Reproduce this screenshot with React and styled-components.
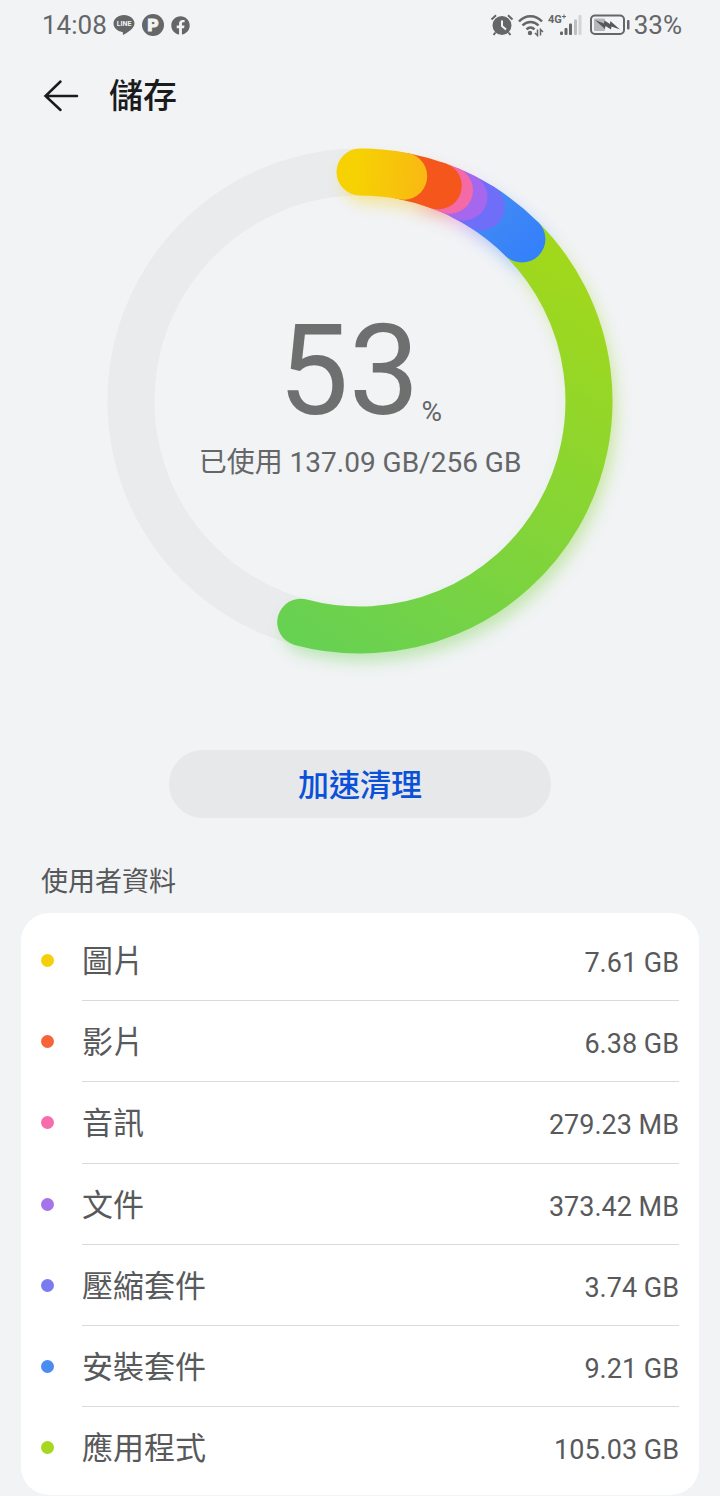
import React from 'react';
import styled, { createGlobalStyle } from 'styled-components'
import { FaFacebook } from 'react-icons/fa'

const CENTER = 253
const RADIUS = 229

// angles in degrees, clockwise from the top of the ring
const segments = [
  { id: 'images', name: '圖片', size: '7.61 GB', dot: '#f5d00a', stroke: 'url(#yellow)', from: 0, to: 11 },
  { id: 'videos', name: '影片', size: '6.38 GB', dot: '#f7643a', stroke: '#f5561c', from: 11, to: 20 },
  { id: 'audio', name: '音訊', size: '279.23 MB', dot: '#f76dab', stroke: '#f36aa6', from: 20, to: 23 },
  { id: 'docs', name: '文件', size: '373.42 MB', dot: '#a674ea', stroke: '#a467ee', from: 23, to: 27 },
  { id: 'archives', name: '壓縮套件', size: '3.74 GB', dot: '#7b7bf0', stroke: '#6f6ef8', from: 27, to: 32 },
  { id: 'packages', name: '安裝套件', size: '9.21 GB', dot: '#4a8cf0', stroke: 'url(#blue)', from: 32, to: 45 },
  { id: 'apps', name: '應用程式', size: '105.03 GB', dot: '#a5d81e', stroke: 'url(#green)', from: 45, to: 195 },
]

const point = angle => {
  const rad = (angle * Math.PI) / 180
  return `${CENTER + RADIUS * Math.sin(rad)} ${CENTER - RADIUS * Math.cos(rad)}`
}

const arc = ({ from, to }) =>
  `M${point(from)} A${RADIUS} ${RADIUS} 0 ${to - from > 180 ? 1 : 0} 1 ${point(to)}`

function StatusBar() {
  return (
    <StyledStatus>
      <Group>
        <span>14:08</span>
        <svg width='22' height='22' viewBox='0 0 22 22'>
          <path fill='#646668' d='M11 1C5.200 1 .5 4.800 .5 9.500c0 4.200 3.700 7.700 8.700 8.400.9.200.8.800.6 2.100-.1.900.4 1 1.200.5 3-1.700 10.500-6 10.500-11C21.500 4.800 16.800 1 11 1z' />
          <text x='11' y='12' textAnchor='middle' fontSize='7' fontWeight='700' fill='#f1f3f5'>LINE</text>
        </svg>
        <svg width='24' height='24' viewBox='0 0 24 24'>
          <circle cx='12' cy='12' r='11' fill='#646668' />
          <text x='12' y='18' textAnchor='middle' fontSize='17' fontWeight='900' fill='#f1f3f5' stroke='#f1f3f5'>P</text>
        </svg>
        <FaFacebook size={19} />
      </Group>
      <Group $tight>
        <svg width='24' height='24' viewBox='0 0 24 24'>
          <circle cx='12' cy='12.500' r='9.500' fill='#646668' />
          <path d='M1.500 6.500 6 2.300M22.500 6.500 18 2.300M5.500 19.500 3.500 22M18.500 19.500l2 2.500' stroke='#646668' strokeWidth='2' fill='none' />
          <path d='M12 7.500v5.500l4 3.500' stroke='#f1f3f5' strokeWidth='2' fill='none' />
        </svg>
        <svg width='28' height='24' viewBox='0 0 28 24' fill='none' stroke='#646668' strokeWidth='2.500'>
          <path d='M2 8.500c6.500-7 16.500-7 23 0M5.500 12.500c4.500-4.600 11.500-4.600 16 0M9.500 16.300c2.400-2.300 5.600-2.300 8 0' />
          <circle cx='13' cy='20' r='2.200' fill='#646668' stroke='none' />
          <path d='M20.500 16.500v6l-2.500-2.500M23.500 22.500v-6l2.500 2.500' strokeWidth='1.500' />
        </svg>
        <svg width='38' height='24' viewBox='0 0 38 24' fill='#646668'>
          <text x='0' y='10' fontSize='11' fontWeight='700' fill='#646668'>4G</text>
          <path d='M14 3.500h4M16 1.500v4' stroke='#646668' />
          <rect x='12' y='18.500' width='3' height='3.500' rx='1' />
          <rect x='16.500' y='15' width='3' height='7' rx='1' />
          <rect x='21' y='10.500' width='3' height='11.500' rx='1' />
          <rect x='26' y='6.500' width='3' height='15.500' rx='1' fill='#bcbec0' />
          <rect x='30.500' y='2' width='3' height='20' rx='1' fill='#d2d4d5' />
        </svg>
        <svg width='42' height='24' viewBox='0 0 42 24'>
          <rect x='2' y='2.500' width='33' height='18.500' rx='4' fill='none' stroke='#646668' strokeWidth='2' />
          <rect x='5' y='5.500' width='11' height='12.500' rx='1' fill='#b5b7b9' />
          <path fill='#55575a' d='m6 7 9 3.500.5-3 5.500 3.500.3-3L31 16.500l-8.500-3-.5 3-5.500-3.500-.5 3z' />
          <rect x='38' y='7' width='2.500' height='9.500' rx='1' fill='#646668' />
        </svg>
        <span>33%</span>
      </Group>
    </StyledStatus>
  )
}

function UsageRing() {
  const stacked = [...segments].reverse()
  return (
    <Ring>
      <svg viewBox='0 0 506 506' aria-hidden='true'>
        <defs>
          <linearGradient id='yellow' gradientUnits='userSpaceOnUse' x1='230' y1='24' x2='320' y2='30'>
            <stop offset='0.200' stopColor='#f6d202' />
            <stop offset='1' stopColor='#f9b813' />
          </linearGradient>
          <linearGradient id='blue' gradientUnits='userSpaceOnUse' x1='380' y1='55' x2='430' y2='105'>
            <stop offset='0' stopColor='#428af3' />
            <stop offset='1' stopColor='#3480fb' />
          </linearGradient>
          <linearGradient id='green' gradientUnits='userSpaceOnUse' x1='430' y1='100' x2='180' y2='480'>
            <stop offset='0' stopColor='#a1d81c' />
            <stop offset='1' stopColor='#67d152' />
          </linearGradient>
          <filter id='glow' x='-20%' y='-20%' width='140%' height='140%'>
            <feGaussianBlur stdDeviation='8' />
          </filter>
        </defs>
        <circle cx={CENTER} cy={CENTER} r={RADIUS} fill='none' stroke='#e9ebec' strokeWidth='47' />
        <g filter='url(#glow)' opacity='0.400' transform='translate(5 9)'>
          {stacked.map(s => (
            <path key={s.id} d={arc(s)} fill='none' stroke={s.stroke} strokeWidth='44' strokeLinecap='round' />
          ))}
        </g>
        {stacked.map(s => (
          <path key={s.id} d={arc(s)} fill='none' stroke={s.stroke} strokeWidth='47' strokeLinecap='round' />
        ))}
      </svg>
      <Summary>
        <Percent>
          <strong>53</strong>
          <span>%</span>
        </Percent>
        <p>已使用 137.09 GB/256 GB</p>
      </Summary>
    </Ring>
  )
}

function App() {
  return (
    <Page>
      <GlobalStyle />
      <StatusBar />
      <Header>
        <button type='button' aria-label='返回'>
          <svg width='36' height='34' viewBox='0 0 36 34' fill='none' stroke='#1a1b1c' strokeWidth='2.500' strokeLinecap='round'>
            <path d='M2.500 17H34M17.500 2.500 2.500 17 17.500 31' />
          </svg>
        </button>
        <h1>儲存</h1>
      </Header>
      <UsageRing />
      <CleanButton type='button'>加速清理</CleanButton>
      <SectionTitle>使用者資料</SectionTitle>
      <Card>
        {segments.map(s => (
          <Row key={s.id}>
            <Dot $color={s.dot} />
            <RowBody>
              <span className='name'>{s.name}</span>
              <span className='size'>{s.size}</span>
            </RowBody>
          </Row>
        ))}
      </Card>
    </Page>
  )
}

export default App;

const GlobalStyle = createGlobalStyle`
  * {
    box-sizing: border-box;
  }
  body {
    margin: 0;
    background: #f1f3f5;
    font-family: Roboto, 'Noto Sans CJK TC', sans-serif;
  }
  h1, h2, p, ul {
    margin: 0;
    padding: 0;
  }
  button {
    border: 0;
    padding: 0;
    font-family: inherit;
    cursor: pointer;
  }
  svg {
    display: block;
  }
`

const Page = styled.main`
  display: flex;
  flex-direction: column;
  min-height: 100vh;
  padding-bottom: 1px;
`

const StyledStatus = styled.div`
  display: flex;
  justify-content: space-between;
  align-items: center;
  height: 50px;
  padding: 0 38px 0 42px;
  color: #646668;
  font-size: 26px;
`

const Group = styled.div`
  display: flex;
  align-items: center;
  gap: ${props => props.$tight ? '3px' : '6px'};
`

const Header = styled.header`
  display: flex;
  align-items: center;
  gap: 30px;
  height: 92px;
  padding: 0 43px;
  button {
    background: none;
  }
  h1 {
    color: #1a1b1c;
    font-size: 34px;
    font-weight: 500;
    line-height: 50px;
  }
`

const Ring = styled.section`
  display: grid;
  align-self: center;
  width: 100%;
  max-width: 506px;
  margin-top: 6px;
  > * {
    grid-area: 1 / 1;
  }
  svg {
    width: 100%;
    overflow: visible;
  }
`

const Summary = styled.div`
  display: flex;
  flex-direction: column;
  align-items: center;
  justify-content: center;
  gap: 9px;
  padding-bottom: 12px;
  color: #646668;
  font-size: 28px;
  line-height: 40px;
`

const Percent = styled.div`
  display: flex;
  align-items: flex-end;
  gap: 2px;
  line-height: 1;
  strong {
    color: #6e706f;
    font-size: 126px;
    font-weight: 400;
  }
  span {
    padding-bottom: 8px;
  }
`

const CleanButton = styled.button`
  align-self: center;
  width: 53%;
  height: 68px;
  margin-top: 96px;
  padding-top: 4px;
  border-radius: 34px;
  background: #e6e8ea;
  color: #0b50d8;
  font-size: 31px;
  font-weight: 500;
  line-height: 64px;
`

const SectionTitle = styled.h2`
  margin: 44px 41px 11px;
  color: #555759;
  font-size: 27px;
  font-weight: 400;
  line-height: 40px;
`

const Card = styled.ul`
  display: flex;
  flex-direction: column;
  flex: 1;
  margin: 0 21px;
  padding: 7px 20px;
  border-radius: 28px;
  background: #fff;
  list-style: none;
`

const Row = styled.li`
  display: flex;
  align-items: center;
  flex: 1;
  gap: 28px;
  min-height: 81px;
`

const Dot = styled.span`
  width: 13px;
  height: 13px;
  border-radius: 50%;
  background: ${props => props.$color};
`

const RowBody = styled.div`
  display: flex;
  justify-content: space-between;
  align-items: baseline;
  align-self: stretch;
  flex: 1;
  padding-top: 5px;
  border-bottom: 1px solid #d9dadb;
  color: #58595b;
  line-height: 74px;
  ${Row}:last-child & {
    border-bottom: 0;
  }
  .name {
    font-size: 31px;
  }
  .size {
    font-size: 27px;
  }
`
